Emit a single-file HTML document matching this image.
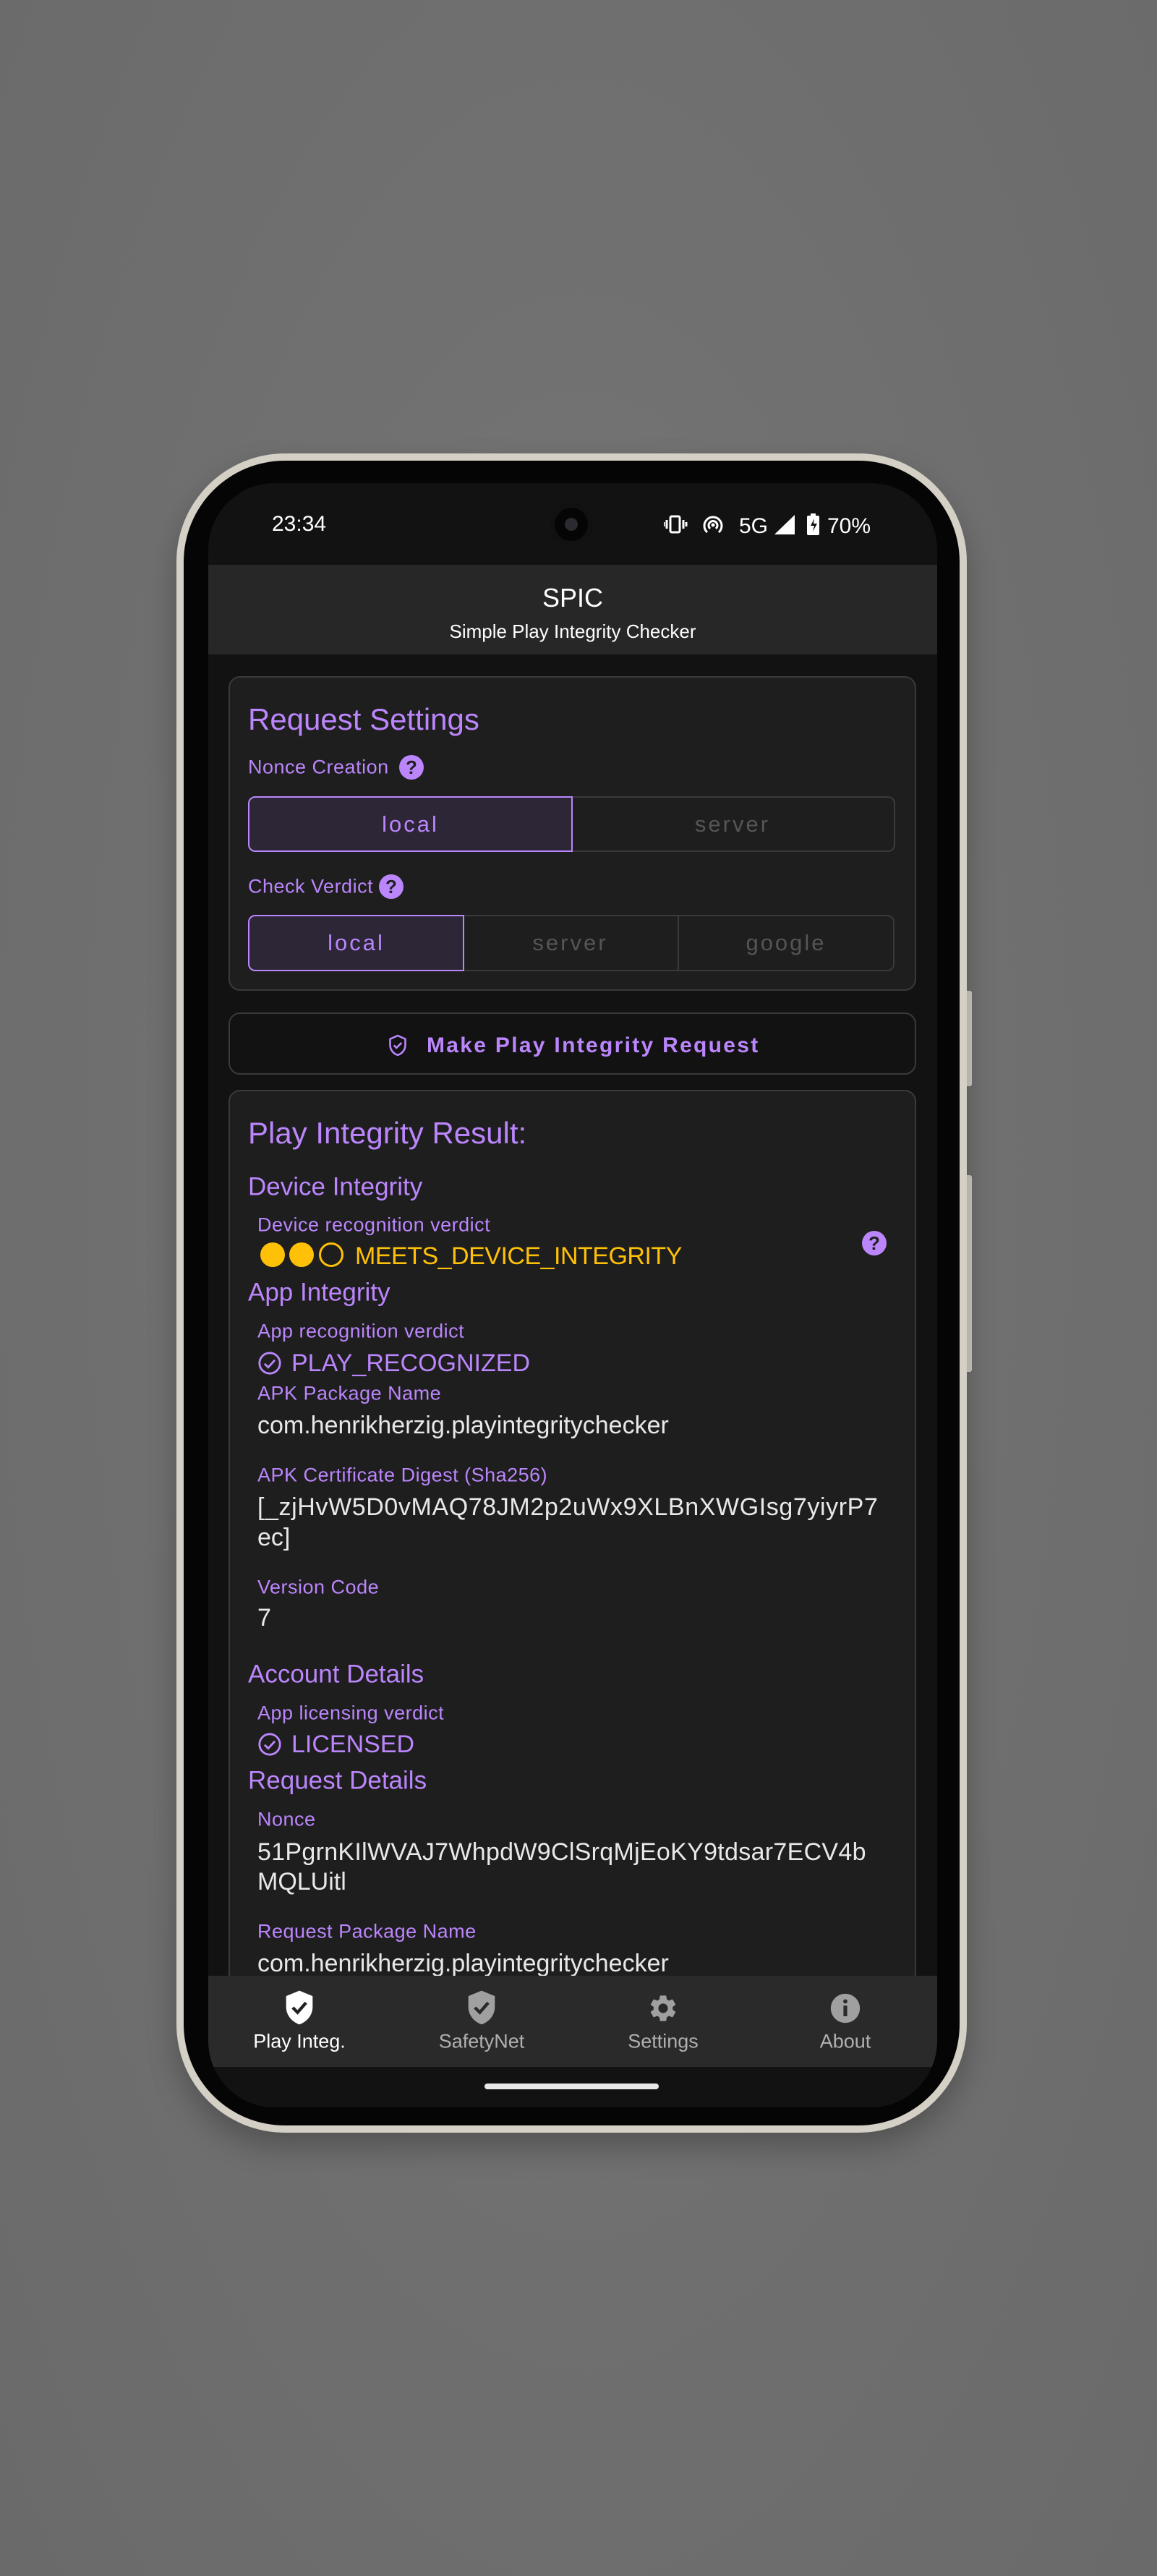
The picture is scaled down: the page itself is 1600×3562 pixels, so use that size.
<!DOCTYPE html>
<html><head><meta charset="utf-8"><style>
*{margin:0;padding:0;box-sizing:border-box}
html,body{width:1600px;height:3562px;overflow:hidden}
body{background:radial-gradient(ellipse at 50% 45%,#7a7a7a 0%,#717171 40%,#6a6a6a 100%);font-family:"Liberation Sans",sans-serif;position:relative}
.abs{position:absolute}
.rim{left:244px;top:627px;width:1093px;height:2322px;border-radius:150px;background:#d4d0c6;box-shadow:0 20px 40px rgba(0,0,0,.25)}
.bez{left:254px;top:637px;width:1073px;height:2302px;border-radius:140px;background:#050505}
.scr{left:288px;top:668px;width:1008px;height:2246px;border-radius:92px;background:#121212;overflow:hidden}
.btn{background:#cfcbc1;width:10px;border-radius:3px}
.t{position:absolute;white-space:nowrap;transform:translateY(-50%);line-height:1}
.p{color:#bb86fc}
.w{color:#e8e8e8}
.card{position:absolute;border:2px solid #3a3a3a;border-radius:16px;background:#1e1e1e}
.seg{position:absolute;border:2px solid #3a3a3a;display:flex;align-items:center;justify-content:center;font-size:31px;letter-spacing:3px;color:#555}
.sel{border-color:#bb86fc;background:#2d2637;color:#bb86fc;z-index:2}
.q{position:absolute;width:34px;height:34px;border-radius:50%;background:#bb86fc;color:#1e1e1e;font-weight:bold;font-size:26px;text-align:center;line-height:34px;transform:translateY(-50%)}
.lbl{font-size:27px;letter-spacing:.5px}
.h2{font-size:35px}
.val{font-size:34px}
</style></head><body>
<div class="abs btn" style="left:1334px;top:1370px;height:132px"></div>
<div class="abs btn" style="left:1334px;top:1625px;height:272px"></div>
<div class="abs rim"></div>
<div class="abs bez"></div>
<div class="abs scr">
 <div class="t" style="left:88px;top:57px;color:#fff;font-size:30px">23:34</div>
 <div class="abs" style="left:473px;top:28px;width:58px;height:58px;border-radius:50%;background:#050505;box-shadow:inset 0 0 0 6px #111"><div style="position:absolute;left:20px;top:20px;width:18px;height:18px;border-radius:50%;background:#2a2a30"></div></div>
 <svg class="abs" style="left:630px;top:42px" width="290" height="32" viewBox="630 42 290 32">
  <g fill="none" stroke="#fff" stroke-width="3">
   <rect x="639" y="46" width="13" height="22" rx="2"/>
   <line x1="634" y1="51" x2="634" y2="63"/><line x1="657" y1="51" x2="657" y2="63"/>
   <line x1="630" y1="54" x2="630" y2="60"/><line x1="661" y1="54" x2="661" y2="60"/>
   <path d="M690 68a12 12 0 1 1 16 0"/><path d="M694 63a6 6 0 1 1 8 0"/>
  </g>
  <circle cx="698" cy="58" r="2.5" fill="#fff"/>
  <text x="734" y="69" fill="#fff" font-size="30" font-family="Liberation Sans">5G</text>
  <path d="M783 71L811 71L811 44Z" fill="#fff"/>
  <rect x="828" y="45" width="17" height="27" rx="2" fill="#fff"/><rect x="833" y="42" width="7" height="4" fill="#fff"/>
  <path d="M838 49l-5 10h5l-2 8 6-11h-5z" fill="#121212"/>
  <text x="856" y="69" fill="#fff" font-size="30" font-family="Liberation Sans">70%</text>
 </svg>
 <div class="abs" style="left:0;top:113px;width:1008px;height:124px;background:#272727"></div>
 <div class="t" style="left:0;width:1008px;text-align:center;top:159px;color:#fff;font-size:36px">SPIC</div>
 <div class="t" style="left:0;width:1008px;text-align:center;top:205px;color:#fff;font-size:26px">Simple Play Integrity Checker</div>

 <div class="card" style="left:28px;top:267px;width:951px;height:435px"></div>
 <div class="t p" style="left:55px;top:327px;font-size:42px">Request Settings</div>
 <div class="t p lbl" style="left:55px;top:393px">Nonce Creation</div>
 <div class="q" style="left:264px;top:393px">?</div>
 <div class="seg sel" style="left:55px;top:433px;width:449px;height:77px;border-radius:10px 0 0 10px">local</div>
 <div class="seg" style="left:502px;top:433px;width:448px;height:77px;border-radius:0 10px 10px 0;border-left:none">server</div>
 <div class="t p lbl" style="left:55px;top:558px">Check Verdict</div>
 <div class="q" style="left:236px;top:558px">?</div>
 <div class="seg sel" style="left:55px;top:597px;width:299px;height:78px;border-radius:10px 0 0 10px">local</div>
 <div class="seg" style="left:352px;top:597px;width:299px;height:78px;border-left:none">server</div>
 <div class="seg" style="left:649px;top:597px;width:300px;height:78px;border-radius:0 10px 10px 0">google</div>

 <div class="card" style="left:28px;top:732px;width:951px;height:86px;background:#121212"></div>
 <svg class="abs" style="left:248px;top:761px" width="28" height="34" viewBox="0 0 24 28"><path d="M12 2L3 6v7c0 6 4 10.5 9 12 5-1.5 9-6 9-12V6z" fill="none" stroke="#bb86fc" stroke-width="2.2"/><path d="M7.5 13.5l3 3 6-6" fill="none" stroke="#bb86fc" stroke-width="2.2"/></svg>
 <div class="t p" style="left:302px;top:778px;font-size:30px;font-weight:bold;letter-spacing:2.3px">Make Play Integrity Request</div>

 <div class="card" style="left:28px;top:839px;width:951px;height:1280px"></div>
 <div class="t p" style="left:55px;top:899px;font-size:42px">Play Integrity Result:</div>
 <div class="t p h2" style="left:55px;top:973px">Device Integrity</div>
 <div class="t p lbl" style="left:68px;top:1026px">Device recognition verdict</div>
 <div class="abs" style="left:72px;top:1050px;width:34px;height:34px;border-radius:50%;background:#ffc107"></div>
 <div class="abs" style="left:112px;top:1050px;width:34px;height:34px;border-radius:50%;background:#ffc107"></div>
 <div class="abs" style="left:153px;top:1050px;width:34px;height:34px;border-radius:50%;border:3px solid #ffc107"></div>
 <div class="t" style="left:203px;top:1069px;font-size:34px;color:#ffc107;letter-spacing:-0.5px">MEETS_DEVICE_INTEGRITY</div>
 <div class="q" style="left:904px;top:1051px">?</div>
 <div class="t p h2" style="left:55px;top:1119px">App Integrity</div>
 <div class="t p lbl" style="left:68px;top:1173px">App recognition verdict</div>
 <svg class="abs" style="left:68px;top:1200px" width="34" height="34" viewBox="0 0 24 24"><circle cx="12" cy="12" r="10" fill="none" stroke="#bb86fc" stroke-width="2"/><path d="M7 12.5l3.5 3.5 6.5-7" fill="none" stroke="#bb86fc" stroke-width="2"/></svg>
 <div class="t p val" style="left:115px;top:1217px">PLAY_RECOGNIZED</div>
 <div class="t p lbl" style="left:68px;top:1259px">APK Package Name</div>
 <div class="t w val" style="left:68px;top:1303px">com.henrikherzig.playintegritychecker</div>
 <div class="t p lbl" style="left:68px;top:1372px">APK Certificate Digest (Sha256)</div>
 <div class="t w val" style="left:68px;top:1416px;letter-spacing:0.6px">[_zjHvW5D0vMAQ78JM2p2uWx9XLBnXWGIsg7yiyrP7</div>
 <div class="t w val" style="left:68px;top:1458px">ec]</div>
 <div class="t p lbl" style="left:68px;top:1527px">Version Code</div>
 <div class="t w val" style="left:68px;top:1569px">7</div>
 <div class="t p h2" style="left:55px;top:1647px">Account Details</div>
 <div class="t p lbl" style="left:68px;top:1701px">App licensing verdict</div>
 <svg class="abs" style="left:68px;top:1727px" width="34" height="34" viewBox="0 0 24 24"><circle cx="12" cy="12" r="10" fill="none" stroke="#bb86fc" stroke-width="2"/><path d="M7 12.5l3.5 3.5 6.5-7" fill="none" stroke="#bb86fc" stroke-width="2"/></svg>
 <div class="t p val" style="left:115px;top:1744px">LICENSED</div>
 <div class="t p h2" style="left:55px;top:1794px">Request Details</div>
 <div class="t p lbl" style="left:68px;top:1848px">Nonce</div>
 <div class="t w val" style="left:68px;top:1893px;letter-spacing:0.3px">51PgrnKIlWVAJ7WhpdW9ClSrqMjEoKY9tdsar7ECV4b</div>
 <div class="t w val" style="left:68px;top:1934px">MQLUitl</div>
 <div class="t p lbl" style="left:68px;top:2003px">Request Package Name</div>
 <div class="t w val" style="left:68px;top:2047px">com.henrikherzig.playintegritychecker</div>

 <div class="abs" style="left:0;top:2064px;width:1008px;height:126px;background:#2a2a2a"></div>
 <div class="abs" style="left:0;top:2190px;width:1008px;height:60px;background:#121212"></div>
 <svg class="abs" style="left:106px;top:2083px" width="40" height="50" viewBox="0 0 24 30"><path d="M12 1L1 5.5v9c0 7 5 12.5 11 14.5 6-2 11-7.5 11-14.5v-9z" fill="#fff"/><path d="M6.5 15l4 4 7-8" fill="none" stroke="#222" stroke-width="2.6"/></svg>
 <svg class="abs" style="left:358px;top:2083px" width="40" height="50" viewBox="0 0 24 30"><path d="M12 1L1 5.5v9c0 7 5 12.5 11 14.5 6-2 11-7.5 11-14.5v-9z" fill="#a0a0a0"/><path d="M6.5 15l4 4 7-8" fill="none" stroke="#2a2a2a" stroke-width="2.6"/></svg>
 <svg class="abs" style="left:607px;top:2087px" width="44" height="44" viewBox="0 0 24 24"><path fill="#a0a0a0" d="M19.14 12.94c.04-.3.06-.61.06-.94 0-.32-.02-.64-.07-.94l2.030-1.58a.49.49 0 0 0 .12-.61l-1.92-3.32a.49.49 0 0 0-.59-.22l-2.39.96c-.5-.38-1.03-.7-1.62-.94l-.36-2.54a.48.48 0 0 0-.48-.41h-3.84c-.24 0-.43.17-.47.41l-.36 2.54c-.59.24-1.13.57-1.62.94l-2.39-.96a.49.49 0 0 0-.59.22L2.74 8.87c-.12.21-.08.47.12.61l2.03 1.58c-.05.3-.09.63-.09.94s.02.64.07.94l-2.03 1.58a.49.49 0 0 0-.12.61l1.92 3.32c.12.22.37.29.59.22l2.39-.96c.5.38 1.03.7 1.62.94l.36 2.54c.05.24.24.41.48.41h3.84c.24 0 .44-.17.47-.41l.36-2.54c.59-.24 1.13-.56 1.62-.94l2.39.96c.22.08.47 0 .59-.22l1.920-3.32c.12-.22.07-.47-.12-.61l-2.01-1.58zM12 15.6A3.6 3.6 0 1 1 12 8.4a3.6 3.6 0 0 1 0 7.2z"/></svg>
 <svg class="abs" style="left:859px;top:2087px" width="44" height="44" viewBox="0 0 24 24"><circle cx="12" cy="12" r="11" fill="#a0a0a0"/><rect x="10.6" y="10" width="2.8" height="8" fill="#2a2a2a"/><circle cx="12" cy="6.8" r="1.6" fill="#2a2a2a"/></svg>
 <div class="t" style="left:26px;width:200px;text-align:center;top:2155px;font-size:27px;color:#fff">Play Integ.</div>
 <div class="t" style="left:278px;width:200px;text-align:center;top:2155px;font-size:27px;color:#b0b0b0">SafetyNet</div>
 <div class="t" style="left:529px;width:200px;text-align:center;top:2155px;font-size:27px;color:#b0b0b0">Settings</div>
 <div class="t" style="left:781px;width:200px;text-align:center;top:2155px;font-size:27px;color:#b0b0b0">About</div>
 <div class="abs" style="left:382px;top:2213px;width:241px;height:8px;border-radius:4px;background:#e8e8e8"></div>
</div>
</body></html>
